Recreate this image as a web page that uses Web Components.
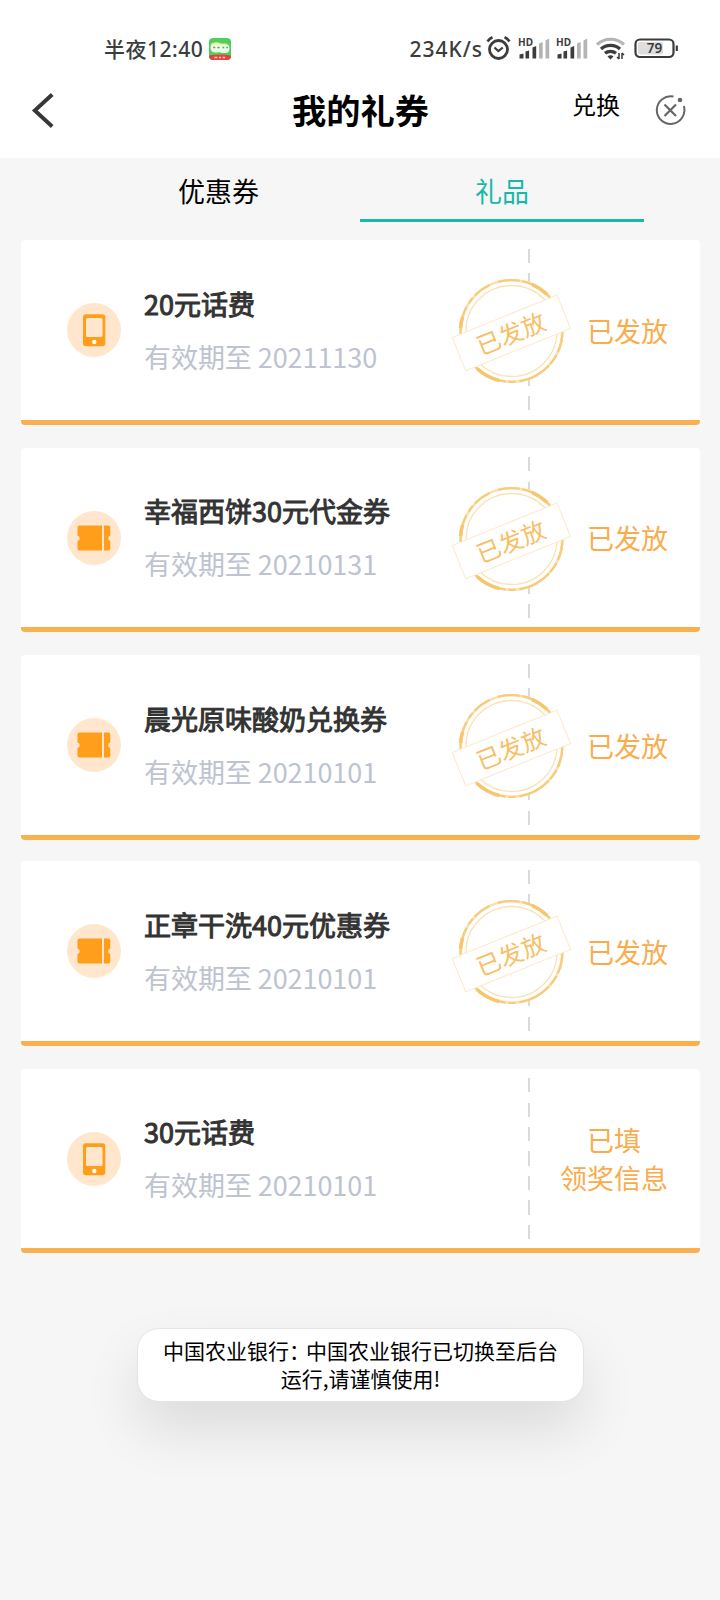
<!DOCTYPE html>
<html lang="zh-CN">
<head>
<meta charset="utf-8">
<title>我的礼券</title>
<style>
html,body{margin:0;padding:0}
body{background:#f6f6f6;font-family:"Noto Sans CJK SC",sans-serif;width:720px;height:1600px;overflow:hidden}
</style>
</head>
<body>
<coupon-app></coupon-app>
<script>
const define = (name, html, setup) => customElements.define(name, class extends HTMLElement {
  constructor() {
    super();
    this.attachShadow({mode: "open"}).innerHTML = html;
  }
  connectedCallback() { if (setup) setup(this, this.shadowRoot); }
});

define("status-bar", `
<style>
:host{display:flex;box-sizing:border-box;height:75px;padding:25px 41px 0 104px;justify-content:space-between;align-items:flex-start;color:#3c3c3c;font-family:"Noto Sans","Noto Sans CJK SC",sans-serif;font-weight:500;font-size:21px;line-height:48px;white-space:nowrap}
.l,.r{display:flex;align-items:center;height:48px}
.app{margin-left:6px;margin-top:-1px}
svg{display:block;flex:none}
.r svg{margin-top:-2px}
.speed{letter-spacing:1px}
.time{letter-spacing:.5px}
</style>
<div class="l"><span class="time">半夜12:40</span>
<svg class="app" width="22" height="22" viewBox="0 0 21 22" preserveAspectRatio="none"><defs><clipPath id="c"><rect width="21" height="22" rx="4"/></clipPath></defs><g clip-path="url(#c)"><rect width="21" height="22" fill="#4fcf5e"/><path d="M0 17.500Q10 15.500 21 17.500V22H0Z" fill="#e5423a"/><rect x="1.500" y="4.500" width="11" height="10" rx="4.500" fill="#f4fbe9"/><rect x="9" y="6" width="10.500" height="9" rx="4" fill="#e9fbe4"/><path d="M2 6h15" stroke="#ffe45a" stroke-width="1.200"/><path d="M4 9.500h2m2 0h2m3 0h1.500m2 0h1.500" stroke="#3fae51" stroke-width="1.500"/><path d="M5 19.500h3m1.500 0h2m1.500 0h2.500" stroke="#fbd0c8" stroke-width="1.500"/></g></svg></div>
<div class="r"><span class="speed">234K/s</span>
<svg width="196" height="30" viewBox="483 33 196 30" fill="none" stroke="#3c3c3c">
<circle cx="498.500" cy="49.500" r="9" stroke-width="2.800"/><path d="M494.500 47.500l3.800 3.500 4.500-3.500" stroke-width="2.200"/><path d="M487.500 41.500q2-3 5-4.200M509.500 41.500q-2-3-5-4.200" stroke-width="2.600"/>
<g id="s" stroke="none" fill="#3c3c3c"><path d="M519.500 54.500l4-1v5h-4zM525.500 51.500l3.600-1v8h-3.600zM532.500 47.500l3.700-1.500v12.500h-3.700z"/><path fill="#b4b4b4" d="M539 43.500l3.700-1.500v16.500h-3.700zM545.500 40.500l3.700-2v20h-3.700z"/></g>
<use href="#s" x="38"/>
<g fill="#3c3c3c" stroke="none" font-family="Noto Sans" font-weight="700" font-size="10"><text x="518" y="45.500" textLength="15" lengthAdjust="spacingAndGlyphs">HD</text><text x="556" y="45.500" textLength="15" lengthAdjust="spacingAndGlyphs">HD</text></g>
<path d="M597 44.500a20 20 0 0 1 27 0" stroke="#b4b4b4" stroke-width="3.200"/><path d="M601 49a14 14 0 0 1 19 0M605 53.300a8.500 8.500 0 0 1 11 0" stroke-width="3.200"/><path d="M607.500 56.500q3-2.500 6 0l-3 3z" fill="#3c3c3c" stroke="none"/><path d="M619 53v6m0 0l-2-2m5 2v-6m0 0l2 2" stroke-width="1.500"/>
<rect x="635.500" y="39.500" width="38" height="17.500" rx="4.500" stroke-width="2.200"/><rect x="638" y="42" width="25" height="12.500" rx="2" fill="#dedede" stroke="none"/><path d="M676.800 45.500v5.500" stroke-width="2.200"/>
<text x="654.500" y="53.200" text-anchor="middle" fill="#3c3c3c" stroke="none" font-family="Noto Sans" font-weight="600" font-size="13.500">79</text>
</svg></div>`);

define("nav-bar", `
<style>
:host{display:grid;grid-template-columns:1fr auto 1fr;height:83px;color:#000}
.back{padding:18px 0 0 31px}
h1{margin:0;font-size:34.200px;line-height:50px;font-weight:700;padding:9px 0 0 1px}
.act{display:flex;justify-content:flex-end;align-items:flex-start;padding-right:34px;gap:35px}
.act span{font-size:24px;line-height:36px;padding-top:11px;font-weight:400}
svg{display:block}.act svg{margin-top:19px}
</style>
<div class="back"><svg width="24" height="36" viewBox="0 0 24 36"><path d="M21.200 1.500L3.800 17.500 21.200 33.500" fill="none" stroke="#373737" stroke-width="3.900"/></svg></div>
<h1>我的礼券</h1>
<div class="act"><span>兑换</span><svg width="31" height="32" viewBox="0 0 31 32" fill="none" stroke="#666" stroke-width="2"><path d="M18.500 2.600A13.800 13.800 0 1 0 28.800 12"/><path d="M9.500 10.500l11.500 11.500M21 10.500L9.500 22" stroke-width="2.200"/><circle cx="25" cy="6" r="2.300" fill="#666" stroke="none"/></svg></div>`);

define("tab-bar", `
<style>
:host{display:grid;grid-template-columns:283px 284px;justify-content:center;height:82px}
</style><slot></slot>`);

define("tab-item", `
<style>
:host{display:block;box-sizing:border-box;height:64px;padding-left:1px;text-align:center;font-size:27px;line-height:66px;color:#000;background:linear-gradient(transparent,transparent) no-repeat 0 100%/284px 3px}
:host([active]){color:#18b9a8;background-image:linear-gradient(#18b9a8,#18b9a8)}
</style><slot></slot>`);

define("status-stamp", `
<style>
:host{display:block;width:126px;height:116px}svg{display:block;overflow:visible}
</style>
<svg width="126" height="116" viewBox="450 272 126 116"><circle cx="512.500" cy="331" r="52" fill="#fff"/>
<g fill="none" stroke="#f9cd82"><circle cx="512.500" cy="331" r="50.700" stroke-width="2.600" stroke="#fbe0af"/><circle cx="512.500" cy="331" r="51" stroke-width="2.200" stroke="#f8cb7a" stroke-dasharray="22 3 11 2 34 4 7 3 18 9"/><path d="M533 284.300a51 51 0 0 1 15 10M463.600 317a51 51 0 0 0-2 11M478 368.500a51 51 0 0 0 22 12" stroke-width="3.600" stroke="#f7c56c"/><circle cx="512.500" cy="331" r="45.500" stroke-width="1.300" stroke="#fbe2b6"/></g>
<g transform="rotate(-22 512 332)"><rect x="455.500" y="315" width="113" height="36" fill="#fff" stroke="#fce9ca" stroke-width="1"/><text x="511.500" y="342.500" text-anchor="middle" font-size="24" font-family="Noto Sans CJK SC" fill="#f7c067">已发放</text></g></svg>`);

define("gift-icon", `
<style>:host{display:block;width:54px;height:54px}svg{display:block}</style><svg width="54" height="54" viewBox="0 0 54 54"></svg>`,
(el, root) => {
  root.querySelector("svg").innerHTML = '<circle cx="27" cy="27" r="27" fill="#ffe6cd"/>' + (el.getAttribute("kind") === "phone"
   ? '<rect x="16" y="11.300" width="22.300" height="32" rx="3" fill="#ff9e1b"/><rect x="19" y="15" width="16.500" height="19" rx="1.500" fill="#ffe6cd"/><circle cx="27.300" cy="39" r="2.200" fill="#fff"/>'
   : '<path d="M12.500 14.500H35v25H12.500a2 2 0 0 1-2-2V30a2.800 2.800 0 0 0 0-5.500v-8a2 2 0 0 1 2-2zM37 14.500h4.300a2 2 0 0 1 2 2v8a2.800 2.800 0 0 0 0 5.500v7.500a2 2 0 0 1-2 2H37z" fill="#ff9e1b"/>');
});

define("gift-card", `
<style>
:host{position:relative;display:grid;grid-template-columns:508px 1fr;box-sizing:border-box;height:var(--h);border-radius:4px;background:#fff;overflow:hidden;border-bottom:5px solid #fbb04f}
.main{display:flex;align-items:flex-start;padding:47px 0 0 45.500px}
gift-icon{margin:16px 23.500px 0 0}
.title,.date{font-size:27px;line-height:40px;white-space:nowrap;font-weight:400}
.title{color:#333;-webkit-text-stroke:1px #333;margin-top:var(--t)}
.date{color:#bdc3cf;margin-top:12.500px;letter-spacing:-.06px}
.state{position:relative;padding-right:32px;font-size:27px;line-height:38.500px;font-weight:400;color:#faac4c;display:flex;align-items:center;justify-content:flex-end;padding-top:1.500px}
.dash{position:absolute;left:507px;top:9px;width:2px;height:162px;background:repeating-linear-gradient(#dadada 0 14px,transparent 14px 24.500px)}
.state div{text-align:center}
status-stamp{position:absolute;left:428px;top:32px}
</style>
<div class="main"><gift-icon></gift-icon><div><div class="title"><slot name="title"></slot></div><div class="date"><slot name="date"></slot></div></div></div>
<div class="state"><div><slot name="state"></slot></div></div><div class="dash"></div>`,
(el, root) => {
  const icon = document.createElement("gift-icon");
  icon.setAttribute("kind", el.getAttribute("kind"));
  root.querySelector("gift-icon").replaceWith(icon);
  if (el.hasAttribute("stamped")) root.append(document.createElement("status-stamp"));
});

define("toast-message", `
<style>
:host{display:block;box-sizing:border-box;width:447px;height:74px;background:#fff;border-radius:22px;border:1px solid #e4e4e4;box-shadow:0 28px 56px rgba(0,0,0,.11);text-align:center;font-size:21px;line-height:28.500px;color:#000;padding-top:6.500px}
</style><slot></slot>`);

define("coupon-app", `
<style>
:host{display:block;width:720px;height:1600px;background:#f6f6f6}
header{background:#fff;height:158px}
.list{display:grid;grid-template-rows:208px 207px 206px 208px 184px;padding:0 20px 0 21px}
toast-message{margin:75px 0 0 137px}
.colon{letter-spacing:-4px}
</style>
<header><status-bar></status-bar><nav-bar></nav-bar></header>
<tab-bar><tab-item>优惠券</tab-item><tab-item active>礼品</tab-item></tab-bar>
<div class="list"></div>
<toast-message>中国农业银行<span class="colon">：</span>中国农业银行已切换至后台<br>运行,请谨慎使用!</toast-message>`,
(el, root) => {
  const gifts = [
    ["phone", "20元话费", "20211130", "已发放", true, 185, -3],
    ["ticket", "幸福西饼30元代金券", "20210131", "已发放", true, 184, -4],
    ["ticket", "晨光原味酸奶兑换券", "20210101", "已发放", true, 185, -3],
    ["ticket", "正章干洗40元优惠券", "20210101", "已发放", true, 185, -3],
    ["phone", "30元话费", "20210101", "已填<br>领奖信息", false, 184, -4]
  ];
  root.querySelector(".list").innerHTML = gifts.map(([kind, title, date, state, stamped, h, t]) =>
    `<gift-card kind="${kind}"${stamped ? " stamped" : ""} style="--h:${h}px;--t:${t}px"><span slot="title">${title}</span><span slot="date">有效期至 ${date}</span><span slot="state">${state}</span></gift-card>`).join("");
});
</script>
</body>
</html>
